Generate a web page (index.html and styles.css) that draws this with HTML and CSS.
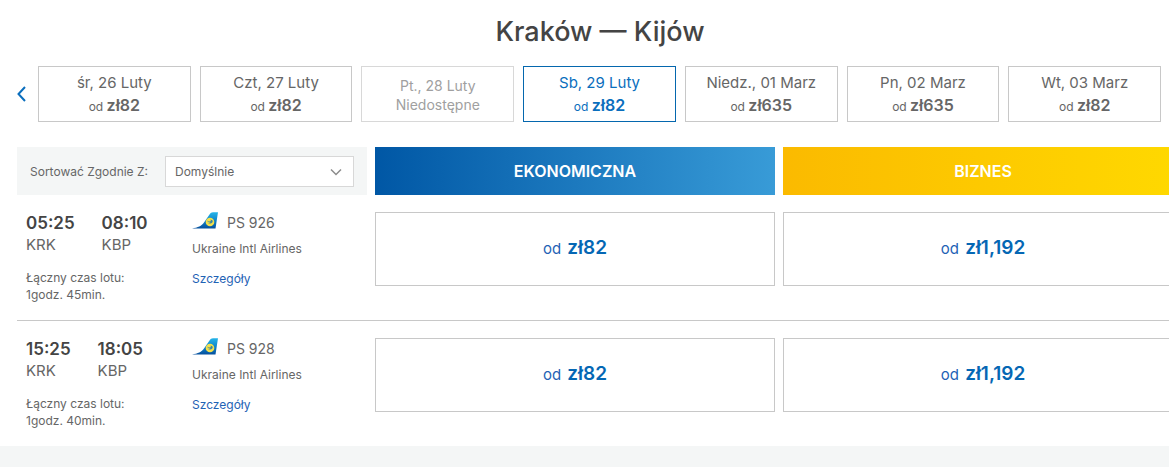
FILE: index.html
```html
<!DOCTYPE html>
<html lang="pl">
<head>
  <meta charset="UTF-8">
  <meta name="viewport" content="width=device-width, initial-scale=1.0">
  <title>Kraków — Kijów</title>
  <link rel="stylesheet" href="styles.css">
</head>
<body>

<!-- Airline tail logo, shared by all flights -->
<svg class="sprite" width="0" height="0" aria-hidden="true">
  <defs>
    <linearGradient id="tail-fill" x1="0" y1="0" x2="0" y2="1">
      <stop offset="0" stop-color="#25b4e8"/>
      <stop offset="0.5" stop-color="#0f86cb"/>
      <stop offset="1" stop-color="#064f9c"/>
    </linearGradient>
    <symbol id="tail" viewBox="0 0 26 17">
      <path d="M0 16.5C6 15.5 9.500 14 12 10.500L17.500 2.500C18.500 1 19.500 0.300 21 0.300H26L23.500 16.500Z" fill="url(#tail-fill)"/>
      <circle cx="18" cy="10" r="4.300" fill="#f4e04a"/>
      <path d="M15 8.500C16 9.300 17.500 9.700 18.500 9.300C19.300 9 19 8.200 18 8C20 7.300 21.300 8.700 20.500 10.200C19.500 11.700 16.800 11.700 15.500 10.800C16.500 11 18 10.800 18.500 10.300C17 10.500 15.500 9.800 15 8.500Z" fill="#3a86a0"/>
    </symbol>
  </defs>
</svg>

<main class="results">
  <h1 class="title">Kraków — Kijów</h1>

  <!-- Date picker strip -->
  <nav class="dates">
    <button class="arrow" aria-label="Poprzednie">
      <svg width="9" height="16" viewBox="0 0 9 16"><path d="M8 1L1.500 8L8 15" fill="none" stroke="#0a6ebd" stroke-width="2"/></svg>
    </button>
    <div class="date-list">
      <button class="date"><span>śr, 26 Luty</span><span class="date-price">od <b>zł82</b></span></button>
      <button class="date"><span>Czt, 27 Luty</span><span class="date-price">od <b>zł82</b></span></button>
      <button class="date unavailable" disabled><span>Pt., 28 Luty</span><span>Niedostępne</span></button>
      <button class="date selected"><span>Sb, 29 Luty</span><span class="date-price">od <b>zł82</b></span></button>
      <button class="date"><span>Niedz., 01 Marz</span><span class="date-price">od <b>zł635</b></span></button>
      <button class="date"><span>Pn, 02 Marz</span><span class="date-price">od <b>zł635</b></span></button>
      <button class="date"><span>Wt, 03 Marz</span><span class="date-price">od <b>zł82</b></span></button>
    </div>
    <button class="arrow next" aria-label="Następne">
      <svg width="9" height="16" viewBox="0 0 9 16"><path d="M1 1L7.500 8L1 15" fill="none" stroke="#0a6ebd" stroke-width="2"/></svg>
    </button>
  </nav>

  <!-- Sorting and fare classes -->
  <div class="columns">
    <div class="sort">
      <label for="sort">Sortować Zgodnie Z:</label>
      <div class="select-wrap">
        <select id="sort" class="select">
          <option>Domyślnie</option>
        </select>
        <svg class="chevron" width="12" height="8" viewBox="0 0 12 8"><path d="M1 1.500L6 6.500L11 1.500" fill="none" stroke="#8c8c8c" stroke-width="1.500"/></svg>
      </div>
    </div>
    <div class="fare-class economy">EKONOMICZNA</div>
    <div class="fare-class business">BIZNES</div>
  </div>

  <!-- Flights -->
  <section class="columns flight">
    <div class="info">
      <div class="schedule">
        <div class="stops">
          <div><div class="time">05:25</div><div class="code">KRK</div></div>
          <div><div class="time">08:10</div><div class="code">KBP</div></div>
        </div>
        <div class="small">Łączny czas lotu:<br>1godz. 45min.</div>
      </div>
      <div class="carrier">
        <div class="number"><svg class="logo" width="26" height="17"><use href="#tail"/></svg>PS 926</div>
        <div class="small">Ukraine Intl Airlines</div>
        <a class="small details" href="#">Szczegóły</a>
      </div>
    </div>
    <button class="fare">od <b>zł82</b></button>
    <button class="fare">od <b>zł1,192</b></button>
  </section>

  <section class="columns flight">
    <div class="info">
      <div class="schedule">
        <div class="stops">
          <div><div class="time">15:25</div><div class="code">KRK</div></div>
          <div><div class="time">18:05</div><div class="code">KBP</div></div>
        </div>
        <div class="small">Łączny czas lotu:<br>1godz. 40min.</div>
      </div>
      <div class="carrier">
        <div class="number"><svg class="logo" width="26" height="17"><use href="#tail"/></svg>PS 928</div>
        <div class="small">Ukraine Intl Airlines</div>
        <a class="small details" href="#">Szczegóły</a>
      </div>
    </div>
    <button class="fare">od <b>zł82</b></button>
    <button class="fare">od <b>zł1,192</b></button>
  </section>
</main>

</body>
</html>
```

FILE: styles.css
```css
* {
  box-sizing: border-box;
}
body {
  margin: 0;
  overflow: hidden;
  background-color: #f4f6f6;
  font-family: Inter, "Open Sans", sans-serif;
  color: #666;
}
button, select {
  font-family: inherit;
  color: inherit;
  cursor: pointer;
}
.sprite {
  position: absolute;
}
/* the sheet runs slightly past the right edge */
.results {
  margin-right: -14px;
  padding: 16px 0 0 17px;
  background-color: #fff;
  box-shadow: 0 1px 4px rgba(0, 0, 0, 0.25);
}
.title {
  margin: 0 0 18px;
  font-size: 27px;
  line-height: 32px;
  font-weight: 500;
  text-align: center;
  color: #444;
}

.dates {
  display: flex;
  margin-bottom: 25px;
}
.arrow {
  display: flex;
  align-items: center;
  width: 21px;
  padding: 0;
  border: none;
  background: none;
}
.arrow.next {
  justify-content: flex-end;
  width: 22px;
}
.date-list {
  display: flex;
  flex: 1;
  gap: 9px;
}
.date {
  display: flex;
  flex: 1 1 0;
  flex-direction: column;
  align-items: center;
  justify-content: center;
  height: 56px;
  padding: 2px 0 0;
  border: 1px solid #c8c8c8;
  background-color: #fff;
  font-size: 15px;
  line-height: 22px;
}
.date-price {
  font-size: 12px;
}
.date-price b {
  font-size: 16px;
  font-weight: 600;
}
.date.selected {
  border-color: #0567ae;
  color: #0a6ebd;
}
.date.unavailable {
  border-color: #d8d8d8;
  color: #a0a0a0;
  font-size: 14px;
  line-height: 19px;
}

.columns {
  display: grid;
  grid-template-columns: 350px 1fr 1fr;
  gap: 8px;
}
.sort {
  display: flex;
  align-items: center;
  justify-content: space-between;
  padding: 0 13px;
  background-color: #f4f6f6;
  font-size: 12px;
}
.select-wrap {
  position: relative;
  width: 189px;
}
.select {
  width: 100%;
  height: 31px;
  padding: 0 9px;
  border: 1px solid #d8d8d8;
  border-radius: 0;
  background-color: #fff;
  font-size: 12px;
  appearance: none;
}
.chevron {
  position: absolute;
  top: 12px;
  right: 12px;
  pointer-events: none;
}
.fare-class {
  font-size: 16px;
  line-height: 48px;
  font-weight: 600;
  text-align: center;
  color: #fff;
}
.economy {
  background: linear-gradient(to right, #0057a5, #389bd7);
}
.business {
  background: linear-gradient(to right, #fbba00, #ffd900);
}

.flight {
  padding: 17px 0;
  border-bottom: 1px solid #c8c8c8;
}
.flight:last-child {
  border-bottom: none;
}
.info {
  display: flex;
  padding-left: 9px;
}
.schedule {
  width: 166px;
}
.stops {
  display: flex;
  gap: 27px;
  margin-bottom: 13px;
}
.time {
  font-size: 17px;
  line-height: 22px;
  font-weight: 600;
  color: #444;
}
.code {
  font-size: 15px;
  line-height: 22px;
}
.small {
  font-size: 12px;
  line-height: 17px;
}
.carrier {
  display: flex;
  flex-direction: column;
  align-items: flex-start;
}
.number {
  display: flex;
  gap: 9px;
  margin-bottom: 6px;
  font-size: 14px;
  line-height: 22px;
}
.details {
  margin-top: 13px;
  color: #1f63b5;
  text-decoration: none;
}
.fare {
  height: 74px;
  padding: 0 0 4px;
  border: 1px solid #c8c8c8;
  background-color: #fff;
  font-size: 15px;
  color: #1f63b5;
}
.fare b {
  margin-left: 2px;
  font-size: 19px;
  font-weight: 600;
  color: #0567b4;
}
```
